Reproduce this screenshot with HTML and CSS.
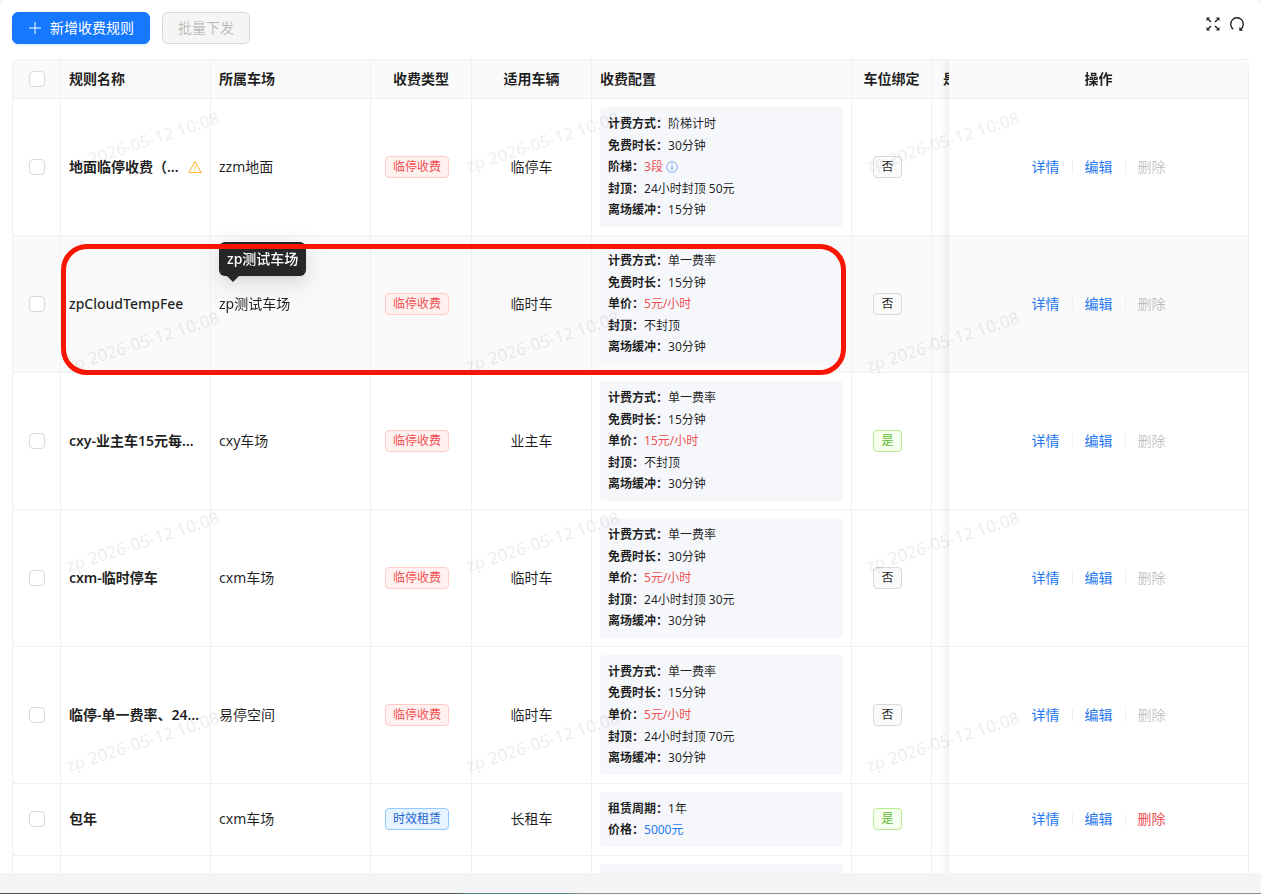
FILE: index.html
```html
<!DOCTYPE html>
<html lang="zh-CN">
  <head>
    <meta charset="UTF-8" />
    <meta name="viewport" content="width=device-width, initial-scale=1.0" />
    <title>收费规则</title>
    <link rel="stylesheet" href="styles.css">
  </head>
  <body>
    <main class="card">
      <div class="toolbar">
        <button type="button" class="btn btn-primary">
          <svg width="14" height="14" viewBox="0 0 14 14" fill="none" stroke="currentColor"><path d="M7 1v12M1 7h12" /></svg>
          新增收费规则
        </button>
        <button type="button" class="btn" disabled>批量下发</button>
        <div class="tools">
          <button type="button" class="icon-btn" aria-label="全屏">
            <svg width="16" height="16" viewBox="0 0 16 16" fill="none" stroke="currentColor" stroke-width="1.4">
              <path d="M3 3l3 3M13 3l-3 3M3 13l3-3M13 13l-3-3" />
              <path fill="currentColor" stroke="none" d="M1.5 1.5h3.6L1.5 5.1zM14.5 1.5h-3.6l3.6 3.6zM1.5 14.5h3.6L1.5 10.9zM14.5 14.5h-3.6l3.6-3.6z" />
            </svg>
          </button>
          <button type="button" class="icon-btn" aria-label="刷新">
            <svg width="16" height="16" viewBox="0 0 16 16" fill="none" stroke="currentColor" stroke-width="1.4">
              <path d="M4.3 13.2A6.3 6.3 0 1 1 11.7 13.2" />
              <path fill="currentColor" stroke="none" d="M10.2 11l.2 4 3.8-.6z" />
            </svg>
          </button>
        </div>
      </div>

      <div class="table-wrap">
        <table class="rules">
          <colgroup>
            <col class="col-check"><col class="col-name"><col class="col-park"><col class="col-type"><col class="col-car"><col class="col-config"><col class="col-bind"><col class="col-more"><col class="col-action">
          </colgroup>
          <thead>
            <tr>
              <th class="center"><input type="checkbox" aria-label="全选"></th>
              <th>规则名称</th>
              <th>所属车场</th>
              <th class="center">收费类型</th>
              <th class="center">适用车辆</th>
              <th>收费配置</th>
              <th class="center">车位绑定</th>
              <th class="center">是否启用节假日</th>
              <th class="center fixed">操作</th>
            </tr>
          </thead>
          <tbody>
            <tr>
              <td class="center"><input type="checkbox" aria-label="选择 地面临停收费"></td>
              <td>
                <div class="name">
                  <span class="ellipsis">地面临停收费（新版）</span>
                  <svg class="warn" width="14" height="14" viewBox="0 0 14 14" fill="none" stroke="currentColor"><path d="M7 1.5L13.2 12.5H.8z" /><path d="M7 5.3v3.6M7 9.9v1.2" /></svg>
                </div>
              </td>
              <td>zzm地面</td>
              <td class="center"><span class="tag tag-red">临停收费</span></td>
              <td class="center">临停车</td>
              <td>
                <div class="config">
                  <div><b>计费方式：</b>阶梯计时</div>
                  <div><b>免费时长：</b>30分钟</div>
                  <div><b>阶梯：</b><span class="red">3段</span>
                    <svg class="info" width="12" height="12" viewBox="0 0 12 12" fill="none" stroke="currentColor"><circle cx="6" cy="6" r="5.3" stroke-width=".7" /><path d="M6 5v4M6 2.8v1.2" /></svg>
                  </div>
                  <div><b>封顶：</b>24小时封顶 50元</div>
                  <div><b>离场缓冲：</b>15分钟</div>
                </div>
              </td>
              <td class="center"><span class="tag">否</span></td>
              <td></td>
              <td class="fixed">
                <div class="actions"><a href="#">详情</a><a href="#">编辑</a><button type="button" disabled>删除</button></div>
              </td>
            </tr>
            <tr class="hover">
              <td class="center"><input type="checkbox" aria-label="选择 zpCloudTempFee"></td>
              <td><div class="name name-latin"><span class="ellipsis">zpCloudTempFee</span></div></td>
              <td><div class="tip-host">zp测试车场<span class="tooltip" role="tooltip">zp测试车场</span></div></td>
              <td class="center"><span class="tag tag-red">临停收费</span></td>
              <td class="center">临时车</td>
              <td>
                <div class="config">
                  <div><b>计费方式：</b>单一费率</div>
                  <div><b>免费时长：</b>15分钟</div>
                  <div><b>单价：</b><span class="red">5元/小时</span></div>
                  <div><b>封顶：</b>不封顶</div>
                  <div><b>离场缓冲：</b>30分钟</div>
                </div>
              </td>
              <td class="center"><span class="tag">否</span></td>
              <td></td>
              <td class="fixed">
                <div class="actions"><a href="#">详情</a><a href="#">编辑</a><button type="button" disabled>删除</button></div>
              </td>
            </tr>
            <tr>
              <td class="center"><input type="checkbox" aria-label="选择 cxy-业主车15元每小时"></td>
              <td><div class="name"><span class="ellipsis">cxy-业主车15元每小时</span></div></td>
              <td>cxy车场</td>
              <td class="center"><span class="tag tag-red">临停收费</span></td>
              <td class="center">业主车</td>
              <td>
                <div class="config">
                  <div><b>计费方式：</b>单一费率</div>
                  <div><b>免费时长：</b>15分钟</div>
                  <div><b>单价：</b><span class="red">15元/小时</span></div>
                  <div><b>封顶：</b>不封顶</div>
                  <div><b>离场缓冲：</b>30分钟</div>
                </div>
              </td>
              <td class="center"><span class="tag tag-green">是</span></td>
              <td></td>
              <td class="fixed">
                <div class="actions"><a href="#">详情</a><a href="#">编辑</a><button type="button" disabled>删除</button></div>
              </td>
            </tr>
            <tr>
              <td class="center"><input type="checkbox" aria-label="选择 cxm-临时停车"></td>
              <td><div class="name"><span class="ellipsis">cxm-临时停车</span></div></td>
              <td>cxm车场</td>
              <td class="center"><span class="tag tag-red">临停收费</span></td>
              <td class="center">临时车</td>
              <td>
                <div class="config">
                  <div><b>计费方式：</b>单一费率</div>
                  <div><b>免费时长：</b>30分钟</div>
                  <div><b>单价：</b><span class="red">5元/小时</span></div>
                  <div><b>封顶：</b>24小时封顶 30元</div>
                  <div><b>离场缓冲：</b>30分钟</div>
                </div>
              </td>
              <td class="center"><span class="tag">否</span></td>
              <td></td>
              <td class="fixed">
                <div class="actions"><a href="#">详情</a><a href="#">编辑</a><button type="button" disabled>删除</button></div>
              </td>
            </tr>
            <tr>
              <td class="center"><input type="checkbox" aria-label="选择 临停-单一费率"></td>
              <td><div class="name"><span class="ellipsis">临停-单一费率、24小时封顶</span></div></td>
              <td>易停空间</td>
              <td class="center"><span class="tag tag-red">临停收费</span></td>
              <td class="center">临时车</td>
              <td>
                <div class="config">
                  <div><b>计费方式：</b>单一费率</div>
                  <div><b>免费时长：</b>15分钟</div>
                  <div><b>单价：</b><span class="red">5元/小时</span></div>
                  <div><b>封顶：</b>24小时封顶 70元</div>
                  <div><b>离场缓冲：</b>30分钟</div>
                </div>
              </td>
              <td class="center"><span class="tag">否</span></td>
              <td></td>
              <td class="fixed">
                <div class="actions"><a href="#">详情</a><a href="#">编辑</a><button type="button" disabled>删除</button></div>
              </td>
            </tr>
            <tr>
              <td class="center"><input type="checkbox" aria-label="选择 包年"></td>
              <td><div class="name"><span class="ellipsis">包年</span></div></td>
              <td>cxm车场</td>
              <td class="center"><span class="tag tag-blue">时效租赁</span></td>
              <td class="center">长租车</td>
              <td>
                <div class="config">
                  <div><b>租赁周期：</b>1年</div>
                  <div><b>价格：</b><span class="blue">5000元</span></div>
                </div>
              </td>
              <td class="center"><span class="tag tag-green">是</span></td>
              <td></td>
              <td class="fixed">
                <div class="actions"><a href="#">详情</a><a href="#">编辑</a><button type="button">删除</button></div>
              </td>
            </tr>
            <tr class="next-row">
              <td></td>
              <td></td>
              <td></td>
              <td></td>
              <td></td>
              <td><div class="config"></div></td>
              <td></td>
              <td></td>
              <td class="fixed"></td>
            </tr>
          </tbody>
        </table>
      </div>

      <div class="watermark" aria-hidden="true">
        <span>zp 2026-05-12 10:08</span><span>zp 2026-05-12 10:08</span><span>zp 2026-05-12 10:08</span>
        <span>zp 2026-05-12 10:08</span><span>zp 2026-05-12 10:08</span><span>zp 2026-05-12 10:08</span>
        <span>zp 2026-05-12 10:08</span><span>zp 2026-05-12 10:08</span><span>zp 2026-05-12 10:08</span>
        <span>zp 2026-05-12 10:08</span><span>zp 2026-05-12 10:08</span><span>zp 2026-05-12 10:08</span>
      </div>
      <div class="marker"></div>
    </main>
    <div class="bottom-edge"></div>
  </body>
</html>
```

FILE: styles.css
```css
* {
  box-sizing: border-box;
}
body {
  display: flex;
  flex-direction: column;
  height: 100vh;
  margin: 0;
  overflow: hidden;
  background: #f4f4f4;
  color: rgba(0, 0, 0, 0.88);
  font-family: "Noto Sans", "Noto Sans CJK SC", sans-serif;
  font-size: 14px;
  line-height: 22px;
}
button,
input {
  margin: 0;
  font: inherit;
}
a {
  color: #1f78ee;
  text-decoration: none;
}

/* Card */
.card {
  position: relative;
  flex: 1;
  min-height: 0;
  margin-bottom: 20px;
  padding: 12px 12px 0;
  overflow: hidden;
  background: #fff;
  border-radius: 8px 8px 0 0;
}
.bottom-edge {
  height: 1px;
  background: linear-gradient(90deg, #50524f 36%, #4f8088 37%, #4f8088 45%, #8c907c 46%);
}

/* Toolbar */
.toolbar {
  display: flex;
  gap: 12px;
  margin-bottom: 15px;
}
.btn {
  display: flex;
  align-items: center;
  gap: 8px;
  height: 32px;
  padding: 0 15px;
  border: 1px solid #d9d9d9;
  border-radius: 6px;
}
.btn:disabled {
  background: #f5f5f5;
  color: rgba(0, 0, 0, 0.25);
}
.btn-primary {
  border-color: #1677ff;
  background: #1677ff;
  color: #fff;
  box-shadow: 0 2px 0 rgba(5, 145, 255, 0.1);
}
.tools {
  display: flex;
  align-items: center;
  gap: 8px;
  height: 24px;
  margin-left: auto;
  padding-right: 4px;
}
.icon-btn {
  display: flex;
  padding: 0;
  border: none;
  background: none;
  color: #222;
}

/* Table */
.table-wrap {
  overflow: hidden;
  border: 1px solid #f0f0f0;
  border-width: 1px 0 0 1px;
  border-radius: 8px 0 0 0;
}
.rules {
  width: 100%;
  min-width: 1340px;
  table-layout: fixed;
  border-collapse: separate;
  border-spacing: 0;
}
.col-check { width: 48px; }
.col-name { width: 150px; }
.col-park { width: 160px; }
.col-type { width: 101px; }
.col-car { width: 120px; }
.col-config { width: 260px; }
.col-bind { width: 80px; }
.col-action { width: 300px; }
th,
td {
  padding: 8px;
  border-right: 1px solid #f0f0f0;
  border-bottom: 1px solid #f0f0f0;
  background: #fff;
  text-align: left;
  vertical-align: middle;
}
th {
  background: #fafafa;
  font-weight: 600;
  white-space: nowrap;
  overflow: hidden;
}
.hover td {
  background: #fafafa;
}
.center {
  text-align: center;
}
.fixed {
  position: sticky;
  right: 0;
  overflow: visible;
}
th.fixed {
  border-top-right-radius: 8px;
}
.fixed::before {
  content: "";
  position: absolute;
  top: 0;
  bottom: -1px;
  left: -30px;
  width: 30px;
  box-shadow: inset -10px 0 8px -8px rgba(5, 5, 5, 0.08);
}
input[type="checkbox"] {
  appearance: none;
  display: block;
  width: 16px;
  height: 16px;
  margin: 0 auto;
  border: 1px solid #d9d9d9;
  border-radius: 4px;
  background: #fff;
}
.name {
  display: flex;
  align-items: center;
  gap: 8px;
  font-weight: 600;
}
.name-latin {
  font-weight: 500;
}
.ellipsis {
  flex: 0 1 auto;
  min-width: 0;
  overflow: hidden;
  text-overflow: ellipsis;
  white-space: nowrap;
}
.warn {
  flex: none;
  color: #f5b02e;
}

/* Tags */
.tag {
  display: block;
  width: fit-content;
  margin: 0 auto;
  padding: 0 7px;
  border: 1px solid #d9d9d9;
  border-radius: 4px;
  background: #fafafa;
  font-size: 12px;
  line-height: 20px;
}
/* tags keep an 8px gap on their right, so they sit left of centre */
td:has(> .tag) {
  padding-right: 16px;
}
.tag-red {
  border-color: #ffccc7;
  background: #fff1f0;
  color: #ee5253;
}
.tag-blue {
  border-color: #91caff;
  background: #e6f4ff;
  color: #2263cc;
}
.tag-green {
  border-color: #b7eb8f;
  background: #f6ffed;
  color: #5cbc32;
}

/* Fee configuration */
.config {
  padding: 6px 8px;
  border-radius: 4px;
  background: #f5f7fb;
  font-size: 12px;
  line-height: 1.8;
}
.config b {
  font-weight: 600;
}
.next-row .config {
  height: 55px;
}
.red {
  color: #ee5253;
}
.blue {
  color: #1f78ee;
}
.info {
  color: #4a8ef0;
  vertical-align: -2px;
}

/* Row actions */
.actions {
  display: flex;
  justify-content: center;
}
.actions > * {
  display: flex;
  align-items: center;
}
.actions > * + *::before {
  content: "";
  width: 1px;
  height: 13px;
  margin: 0 12px;
  background: #f0f0f0;
}
.actions button {
  padding: 0;
  border: none;
  background: none;
  color: #ee5253;
}
.actions button:disabled {
  color: rgba(0, 0, 0, 0.25);
}

/* Tooltip */
.tip-host {
  position: relative;
}
.tooltip {
  position: absolute;
  bottom: 39px;
  left: 0;
  padding: 6px 8px;
  border-radius: 6px;
  background: #262626;
  color: #fff;
  font-weight: 500;
  white-space: nowrap;
  box-shadow: 0 6px 16px rgba(0, 0, 0, 0.08), 0 3px 6px -4px rgba(0, 0, 0, 0.12), 0 9px 28px 8px rgba(0, 0, 0, 0.05);
}
.tooltip::after {
  content: "";
  position: absolute;
  top: 100%;
  left: 8px;
  border: 6px solid transparent;
  border-top-color: #262626;
  border-bottom: none;
}

/* Overlays */
.watermark {
  position: absolute;
  top: 131px;
  left: 63px;
  display: grid;
  grid-template-columns: repeat(3, 400px);
  grid-auto-rows: 200px;
  color: rgba(0, 0, 0, 0.08);
  font-size: 17px;
  pointer-events: none;
}
.watermark span {
  justify-self: start;
  align-self: start;
  transform: rotate(-18deg);
}
.marker {
  position: absolute;
  top: 244px;
  left: 61px;
  width: 785px;
  height: 131px;
  border: 5px solid #f91504;
  border-radius: 26px;
  pointer-events: none;
}
```
